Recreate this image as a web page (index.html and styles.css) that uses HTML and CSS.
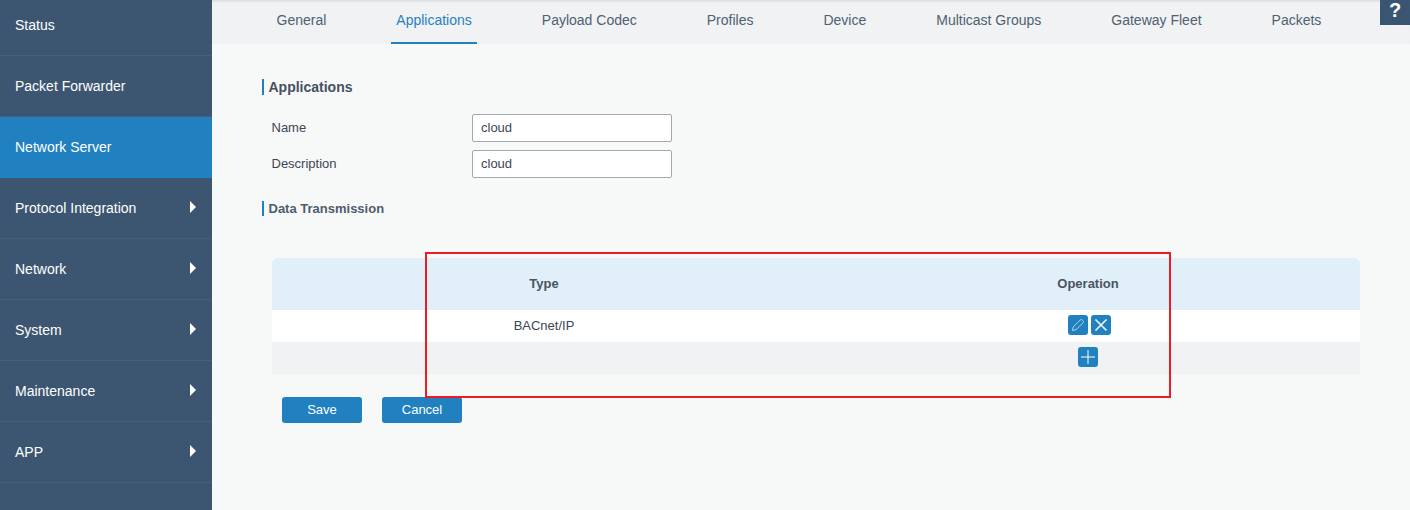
FILE: index.html
```html
<!DOCTYPE html>
<html lang="en">
<head>
<meta charset="utf-8">
<title>Applications</title>
<link rel="stylesheet" href="styles.css">
</head>
<body>
<div class="app">
  <aside class="sidebar">
    <a class="nav-item first">Status</a>
    <a class="nav-item">Packet Forwarder</a>
    <a class="nav-item active">Network Server</a>
    <a class="nav-item">Protocol Integration<span class="caret"></span></a>
    <a class="nav-item">Network<span class="caret"></span></a>
    <a class="nav-item">System<span class="caret"></span></a>
    <a class="nav-item">Maintenance<span class="caret"></span></a>
    <a class="nav-item">APP<span class="caret"></span></a>
  </aside>
  <main class="main">
    <nav class="tabs">
      <a class="tab">General</a>
      <a class="tab current">Applications</a>
      <a class="tab">Payload Codec</a>
      <a class="tab">Profiles</a>
      <a class="tab">Device</a>
      <a class="tab">Multicast Groups</a>
      <a class="tab">Gateway Fleet</a>
      <a class="tab">Packets</a>
    </nav>
    <div class="content">
      <h2 class="section-title">Applications</h2>
      <div class="field"><label class="field-label">Name</label><input class="field-input" value="cloud"></div>
      <div class="field"><label class="field-label">Description</label><input class="field-input" value="cloud"></div>
      <h3 class="section-title small">Data Transmission</h3>
      <table class="grid">
        <thead>
          <tr><th>Type</th><th>Operation</th></tr>
        </thead>
        <tbody>
          <tr class="row-light">
            <td>BACnet/IP</td>
            <td>
              <div class="ops pair">
                <button class="icon-btn" aria-label="Edit">
                  <svg viewBox="0 0 20 20" width="20" height="20"><path d="M4.5 15.5l.8-3.6 6.9-6.9c.6-.6 1.4-.6 2 0l.8.8c.6.6.6 1.4 0 2l-6.9 6.9z" fill="none" stroke="#b9d2e6" stroke-width="1"/></svg>
                </button>
                <button class="icon-btn" aria-label="Delete">
                  <svg viewBox="0 0 20 20" width="20" height="20"><path d="M4.5 4.5l11 11M15.5 4.5l-11 11" fill="none" stroke="#f2f6fa" stroke-width="1.6"/></svg>
                </button>
              </div>
            </td>
          </tr>
          <tr class="row-gray">
            <td></td>
            <td>
              <div class="ops">
                <button class="icon-btn" aria-label="Add">
                  <svg viewBox="0 0 20 20" width="20" height="20"><path d="M10 3v14M3 10h14" fill="none" stroke="#fff" stroke-width="1"/></svg>
                </button>
              </div>
            </td>
          </tr>
        </tbody>
      </table>
      <div class="actions">
        <button class="btn">Save</button>
        <button class="btn">Cancel</button>
      </div>
    </div>
  </main>
  <div class="help">?</div>
  <div class="annotation"></div>
</div>
</body>
</html>
```
FILE: styles.css
```css
* { box-sizing: border-box; }
html, body { margin: 0; height: 100%; overflow: hidden; }
body { font-family: "Liberation Sans", Arial, sans-serif; font-size: 14px; color: #3f4a58; background: #f7f9f9; }
.app { display: flex; height: 510px; position: relative; }

.sidebar { width: 212px; flex: none; background: #3c5672; }
.nav-item {
  display: flex; align-items: center; justify-content: space-between;
  height: 61px; padding: 0 16px 0 15px;
  color: #fff; font-size: 14px;
  border-bottom: 1px solid #46607c;
}
.nav-item.first { height: 56px; padding-bottom: 6px; }
.nav-item.active { background: #2180c0; border-bottom-color: #2180c0; }
.caret {
  width: 0; height: 0;
  border-left: 6px solid #fff;
  border-top: 6px solid transparent;
  border-bottom: 6px solid transparent;
  margin-top: -3px;
}

.main { flex: 1; min-width: 0; }
.tabs {
  display: flex; gap: 60px; height: 44px; padding-left: 59.5px;
  background: #f0f2f4;
  box-shadow: inset 0 3px 3px -2px #d4d7da;
}
.tab {
  height: 44px; padding: 12px 5px 0;
  font-size: 14px; line-height: 16px; color: #4f6172;
}
.tab.current { color: #2a80c0; border-bottom: 2px solid #2180c0; }

.content { padding: 35px 50px 0 50px; }
.section-title {
  margin: 0; padding-left: 4.5px;
  border-left: 2px solid #2180c0;
  font-size: 14px; font-weight: bold; line-height: 16px; color: #46505e;
}
.section-title.small { font-size: 13px; line-height: 15px; margin-top: 23px; color: #4f5c6b; }
.field { display: flex; align-items: center; height: 28px; margin-top: 8px; padding-left: 9.5px; }
.section-title + .field { margin-top: 19px; }
.field-label { width: 200.5px; padding-bottom: 2px; font-size: 13px; color: #3c4654; }
.field-input {
  width: 200px; height: 28px; padding: 0 8px 2px;
  border: 1px solid #a3aab2; border-radius: 2px; background: #fff;
  font: 13px "Liberation Sans", Arial, sans-serif; color: #3c4654;
}

.grid {
  width: 1088px; margin: 42px 0 0 10px;
  border-collapse: separate; border-spacing: 0; table-layout: fixed;
}
.grid th {
  height: 52px; padding: 0 0 2px; background: #e1eff8;
  font-size: 13px; font-weight: bold; color: #4a5463; text-align: center;
}
.grid th:first-child { border-top-left-radius: 6px; }
.grid th:last-child { border-top-right-radius: 6px; }
.grid td { height: 32px; padding: 0 0 2px; text-align: center; font-size: 13px; color: #3c4654; }
.row-light td { background: #fff; }
.row-gray td { background: #f0f2f4; }
.ops { display: flex; justify-content: center; gap: 3px; }
.ops.pair { padding-left: 2px; }
.icon-btn {
  width: 20px; height: 20px; padding: 0; border: 0; border-radius: 3px;
  background: #2180c0; display: block;
}
.icon-btn svg { display: block; }

.actions { display: flex; gap: 20px; margin: 23px 0 0 20px; }
.btn {
  width: 80px; height: 26px; padding: 0 0 2px; border: 0; border-radius: 3px;
  background: #2180c0; color: #fff;
  font: 13px "Liberation Sans", Arial, sans-serif;
}

.help {
  position: absolute; top: 0; right: 0; width: 30px; height: 25px;
  background: #3a5572; color: #fff;
  font-size: 20px; font-weight: bold; line-height: 20px; text-align: center;
}
.annotation {
  position: absolute; left: 425px; top: 252px; width: 746px; height: 146px;
  border: 2px solid #ed1c24; pointer-events: none;
}
```
